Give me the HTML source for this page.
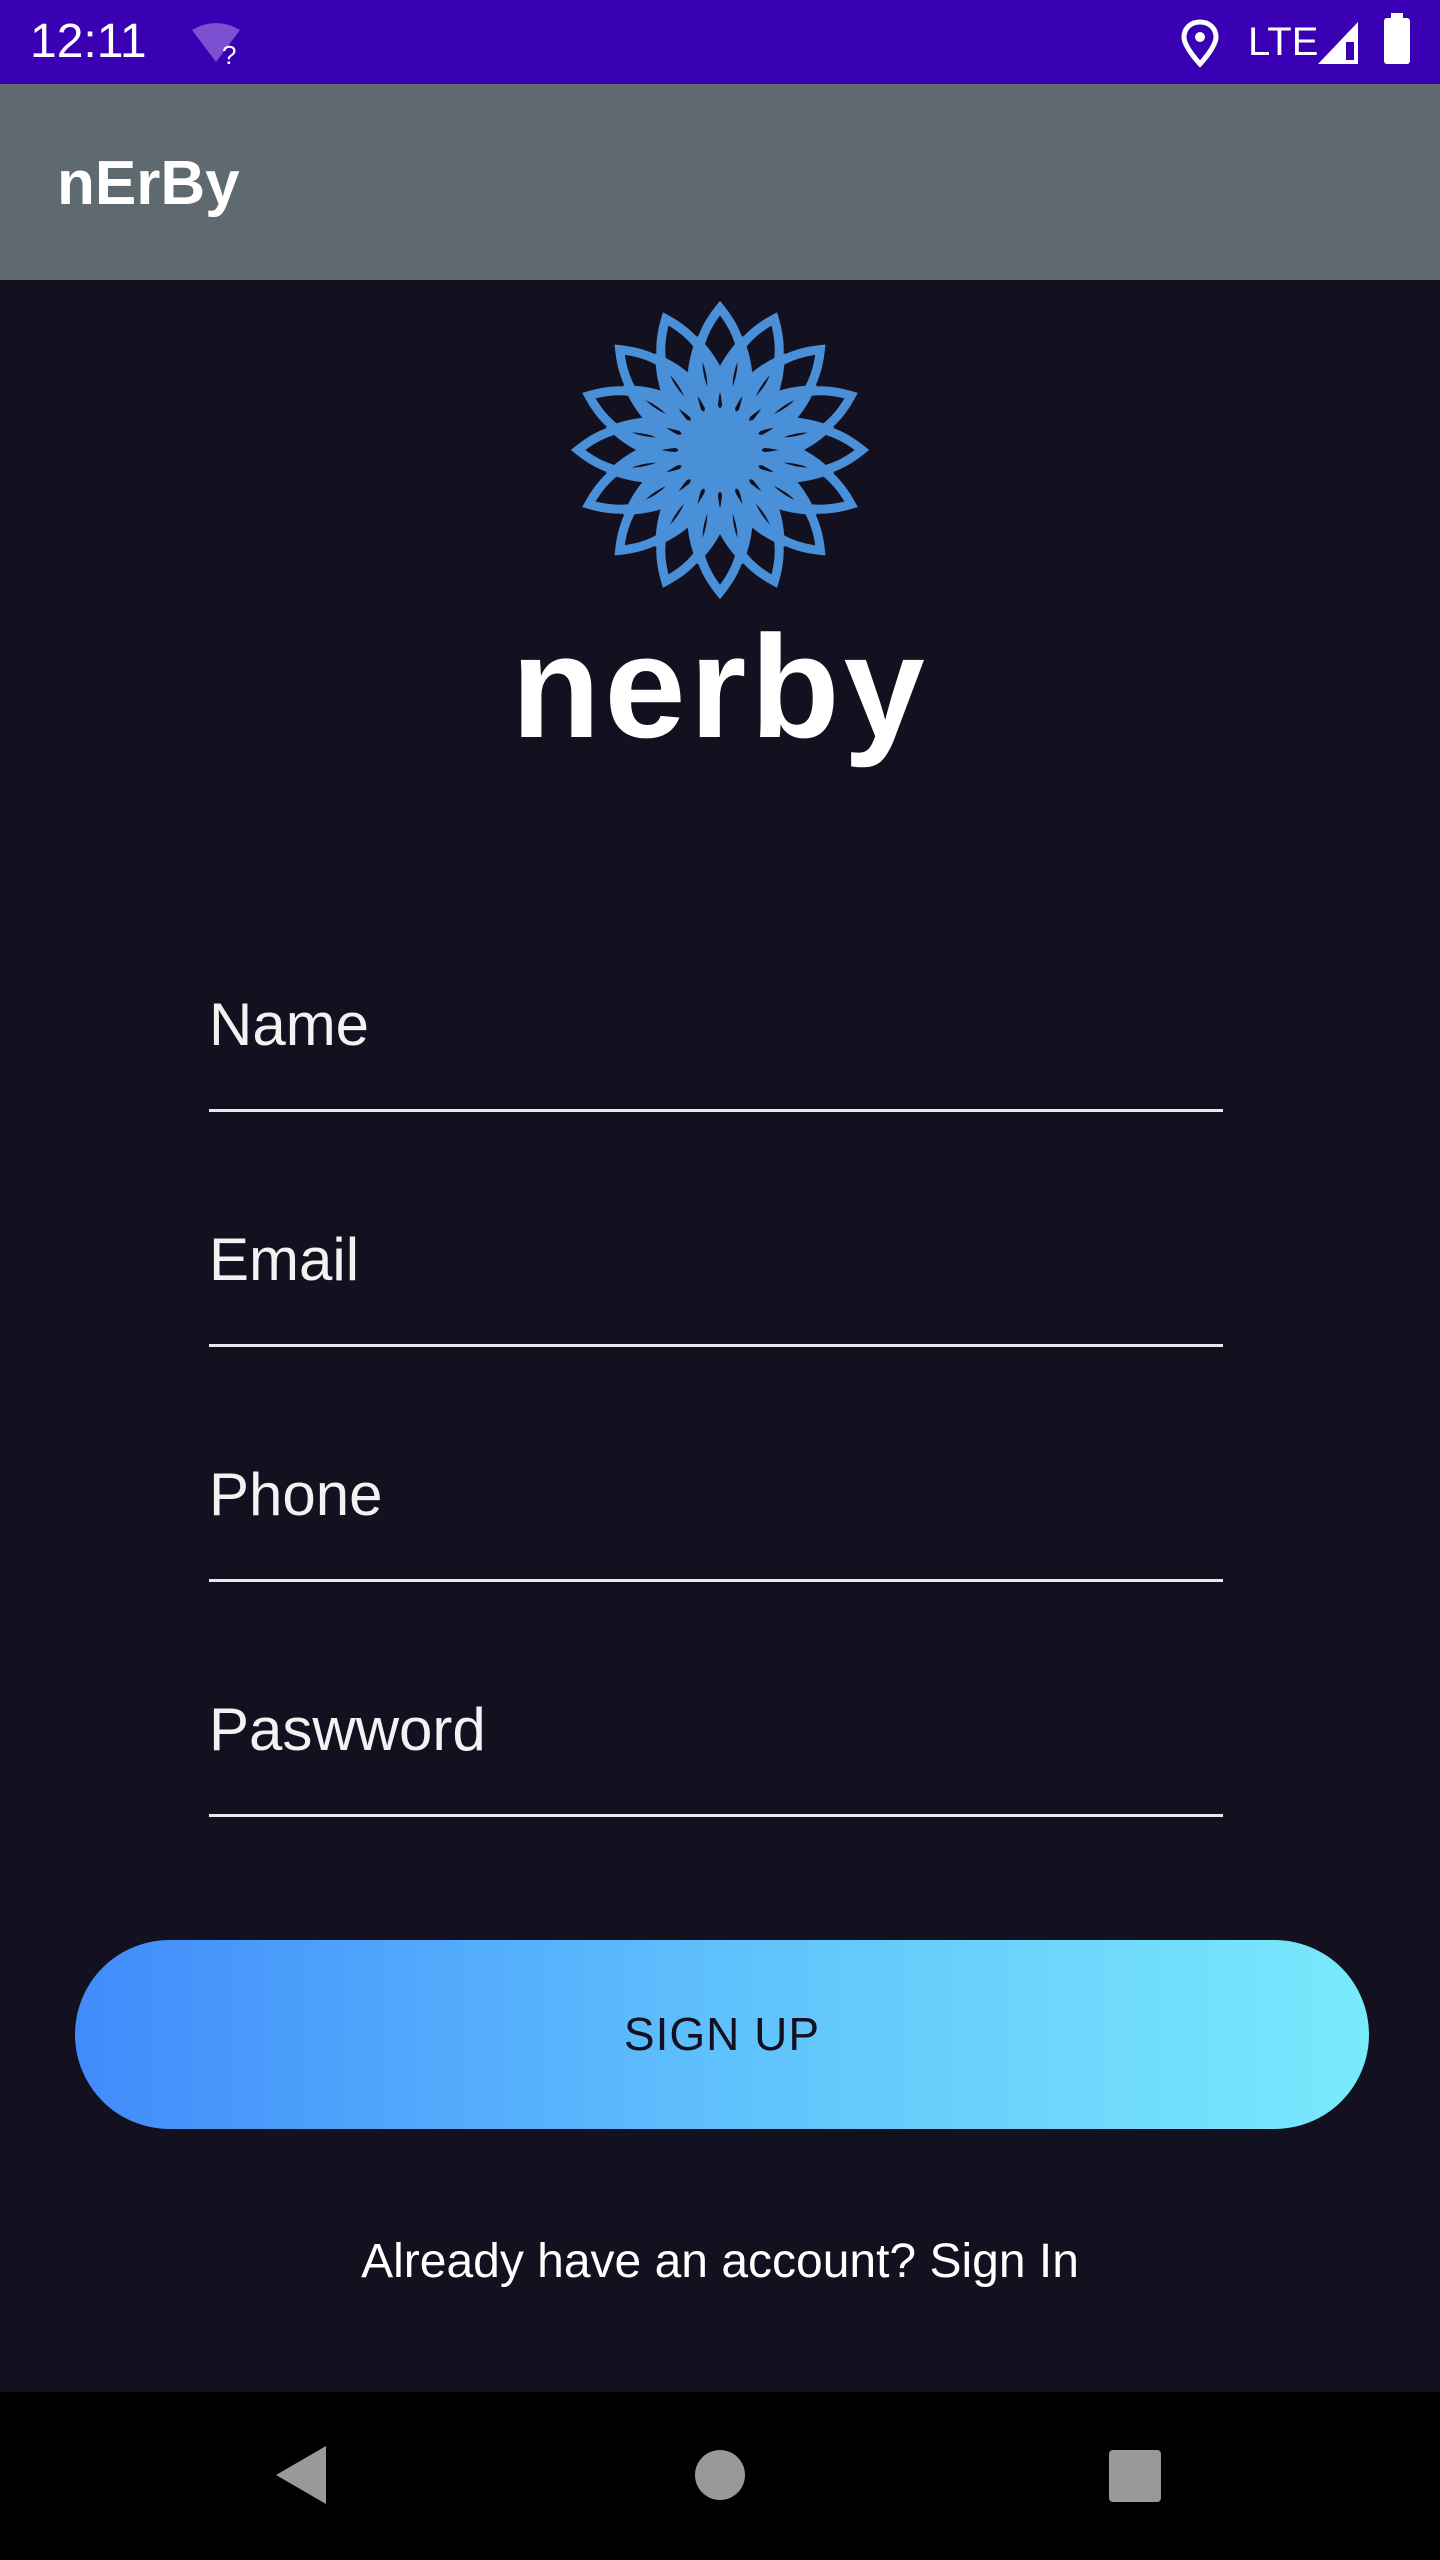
<!DOCTYPE html>
<html><head><meta charset="utf-8"><style>
*{margin:0;padding:0;box-sizing:border-box}
body{width:1440px;height:2560px;background:#13111f;font-family:"Liberation Sans",sans-serif;position:relative;overflow:hidden;color:#fff}
.sb{position:absolute;top:0;left:0;width:1440px;height:84px;background:#3a00b3}
.tb{position:absolute;top:84px;left:0;width:1440px;height:196px;background:#5f6a70}
.tb span{position:absolute;left:57px;top:64px;font-size:62px;font-weight:bold}
.field{position:absolute;left:209px;width:1014px;border-bottom:3px solid #e8e8ee;height:100px}
.field span{position:absolute;left:0;top:-22px;font-size:60px;color:#f2f2f2}
.btn{position:absolute;left:75px;top:1940px;width:1294px;height:189px;border-radius:95px;background:linear-gradient(90deg,#418bfb,#5fc1fc 50%,#79eafc);color:#13111f;font-size:46px;text-align:center;line-height:189px;letter-spacing:1px}
.nav{position:absolute;top:2392px;left:0;width:1440px;height:168px;background:#000}
</style></head><body>
<div class="sb">
<div style="position:absolute;left:30px;top:14px;font-size:48px">12:11</div>
<svg style="position:absolute;left:188px;top:22px" width="60" height="46" viewBox="0 0 60 46"><path d="M4 8 Q28 -6 52 8 L28 40Z" fill="#7a4fd0"/><text x="34" y="42" font-size="26" fill="#fff" font-family="Liberation Sans">?</text></svg>
<svg style="position:absolute;left:1180px;top:18px" width="40" height="50" viewBox="0 0 40 50"><path d="M20 4 C10 4 4 11 4 19 C4 29 20 46 20 46 C20 46 36 29 36 19 C36 11 30 4 20 4Z" fill="none" stroke="#fff" stroke-width="5"/><circle cx="20" cy="19" r="5" fill="#fff"/></svg>
<div style="position:absolute;left:1248px;top:20px;font-size:40px">LTE</div>
<svg style="position:absolute;left:1316px;top:20px" width="44" height="46"><path d="M42 2 L42 44 L2 44Z" fill="#fff"/><rect x="30" y="22" width="8" height="18" fill="#3a00b3"/></svg>
<div style="position:absolute;left:1384px;top:18px;width:26px;height:46px;background:#fff;border-radius:3px"></div>
<div style="position:absolute;left:1391px;top:13px;width:12px;height:6px;background:#fff"></div>
</div>
<div class="tb"><span>nErBy</span></div>
<svg style="position:absolute;left:560px;top:300px" width="320" height="300" viewBox="-160 -150 320 300">
<g fill="none" stroke="#4a90d9" stroke-width="9" stroke-linejoin="miter">
<g id="o">
<path d="M0 -34 Q44 -88 0 -142 Q-44 -88 0 -34Z"/>
</g>
<use href="#o" transform="rotate(22.5)"/><use href="#o" transform="rotate(45)"/><use href="#o" transform="rotate(67.5)"/><use href="#o" transform="rotate(90)"/><use href="#o" transform="rotate(112.5)"/><use href="#o" transform="rotate(135)"/><use href="#o" transform="rotate(157.5)"/><use href="#o" transform="rotate(180)"/><use href="#o" transform="rotate(202.5)"/><use href="#o" transform="rotate(225)"/><use href="#o" transform="rotate(247.5)"/><use href="#o" transform="rotate(270)"/><use href="#o" transform="rotate(292.5)"/><use href="#o" transform="rotate(315)"/><use href="#o" transform="rotate(337.5)"/>
<g id="i" transform="rotate(11.25)"><path d="M0 0 Q32 -55 0 -108 Q-32 -55 0 0Z"/></g>
<use href="#i" transform="rotate(22.5)"/><use href="#i" transform="rotate(45)"/><use href="#i" transform="rotate(67.5)"/><use href="#i" transform="rotate(90)"/><use href="#i" transform="rotate(112.5)"/><use href="#i" transform="rotate(135)"/><use href="#i" transform="rotate(157.5)"/><use href="#i" transform="rotate(180)"/><use href="#i" transform="rotate(202.5)"/><use href="#i" transform="rotate(225)"/><use href="#i" transform="rotate(247.5)"/><use href="#i" transform="rotate(270)"/><use href="#i" transform="rotate(292.5)"/><use href="#i" transform="rotate(315)"/><use href="#i" transform="rotate(337.5)"/>
</g>
<circle r="24" fill="#4a90d9"/>
</svg>
<div style="position:absolute;left:0;width:1440px;top:614px;line-height:1;text-align:center;font-size:146px;font-weight:bold;letter-spacing:4px">nerby</div>
<div class="field" style="top:1012px"><span>Name</span></div>
<div class="field" style="top:1247px"><span>Email</span></div>
<div class="field" style="top:1482px"><span>Phone</span></div>
<div class="field" style="top:1717px"><span>Paswword</span></div>
<div class="btn">SIGN UP</div>
<div style="position:absolute;left:0;width:1440px;top:2234px;text-align:center;font-size:48px">Already have an account? Sign In</div>
<div class="nav">
<svg style="position:absolute;left:272px;top:52px" width="60" height="62"><path d="M54 2 L54 60 L4 31Z" fill="#999"/></svg>
<div style="position:absolute;left:695px;top:58px;width:50px;height:50px;border-radius:50%;background:#999"></div>
<div style="position:absolute;left:1109px;top:58px;width:52px;height:52px;border-radius:4px;background:#999"></div>
</div>
</body></html>
